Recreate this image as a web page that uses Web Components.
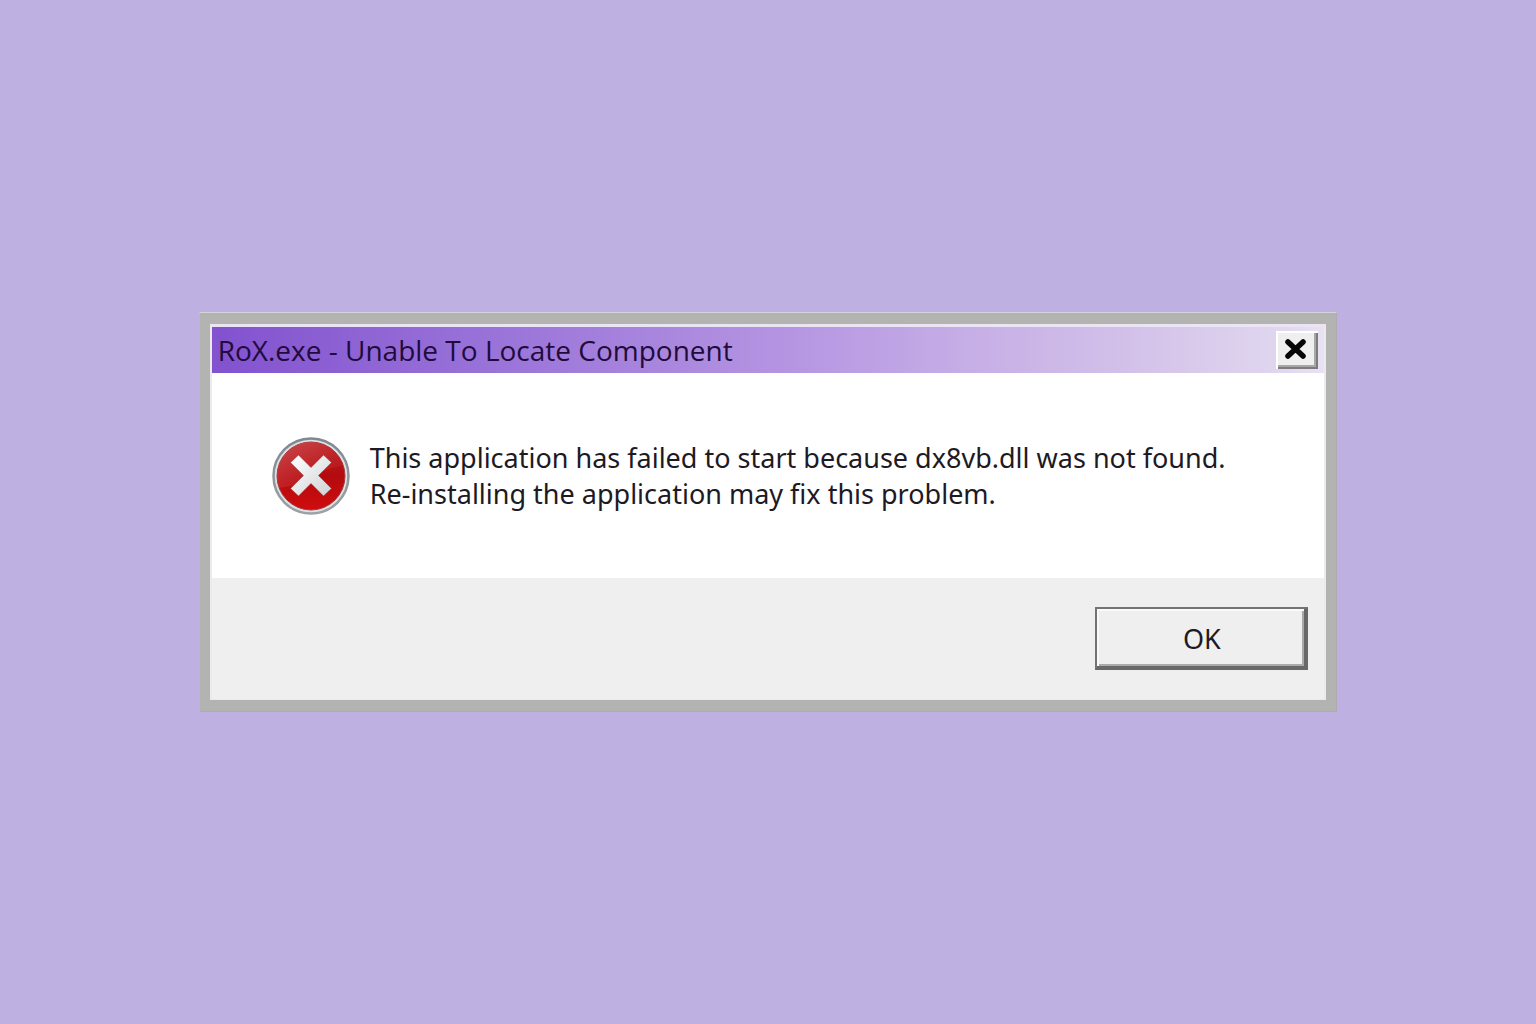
<!DOCTYPE html>
<html lang="en">
<head>
<meta charset="utf-8">
<meta name="viewport" content="width=device-width, initial-scale=1">
<title>RoX.exe - Unable To Locate Component</title>
<style>
  html, body { height: 100%; }
  body {
    margin: 0;
    display: grid;
    place-items: center;
    background: #bfb0e2;
    color: #1d1a24;
    font: 27px/36px "Noto Sans", "Open Sans", sans-serif;
  }
</style>
</head>
<body>
<classic-dialog>
  <title-bar slot="title">RoX.exe - Unable To Locate Component</title-bar>
  <error-icon slot="icon"></error-icon>
  <span>This application has failed to start because dx8vb.dll was not found.<br>Re-installing the application may fix this problem.</span>
  <dialog-button slot="actions">OK</dialog-button>
</classic-dialog>

<script>
class ClassicDialog extends HTMLElement {
  constructor() {
    super();
    this.attachShadow({ mode: 'open' }).innerHTML = `
      <style>
        :host { display: block; width: 74vw;
          background: #b3b3b1; border: 1px solid #aeabb3; border-top-color: #d6d2dc; border-left-color: #bcb7c4; }
        .window { margin: 11px 10px; background: #fff; border: solid #eceaee; border-top-color: #ebe4f2; border-width: 3px 2px 1px; }
        main { display: flex; align-items: center; gap: 20px; height: 205px; padding: 0 60px; box-sizing: border-box; }
        p { margin: 0; }
        footer { display: flex; justify-content: flex-end; padding: 29px 16px; background: #efefef; }
      </style>
      <section class="window" role="alertdialog" aria-labelledby="t" aria-describedby="m">
        <header id="t"><slot name="title"></slot></header>
        <main><slot name="icon"></slot><p id="m"><slot></slot></p></main>
        <footer><slot name="actions"></slot></footer>
      </section>`;
  }
}

class TitleBar extends HTMLElement {
  constructor() {
    super();
    this.attachShadow({ mode: 'open' }).innerHTML = `
      <style>
        :host { display: flex; align-items: center; justify-content: space-between; height: 46px;
          padding: 0 6px; color: #210b3c;
          background: linear-gradient(90deg, #8252cf, #9a74d9 26%, #b595e2 52%, #c6aee6 68%, #d2c0e9 82%, #e0d6ef 96%, #e9e2f2); }
        h1 { margin: 0; font: 28px/36px "Open Sans", "Noto Sans", sans-serif; white-space: nowrap; }
        button { box-sizing: border-box; width: 42px; height: 38px; padding: 0; border: 0; background: #efefef;
          display: grid; place-items: center;
          box-shadow: inset 2px 2px #fff, inset -2px -2px #7d7a80, inset -4px -4px #a8a8a8; }
        svg { display: block; width: 42px; height: 38px; }
      </style>
      <h1><slot></slot></h1>
      <button type="button" aria-label="Close">
        <svg viewBox="0 0 42 38" aria-hidden="true"><path d="M12 11 27 25M27 11 12 25" fill="none" stroke="#060606" stroke-width="5.500" stroke-linecap="round"/></svg>
      </button>`;
  }
}

class ErrorIcon extends HTMLElement {
  constructor() {
    super();
    this.attachShadow({ mode: 'open' }).innerHTML = `
      <style>
        :host { display: block; flex: none; width: 78px; height: 78px; }
        svg { display: block; width: 100%; height: 100%; }
      </style>
      <svg viewBox="0 0 78 78" role="img" aria-label="Error">
        <defs>
          <linearGradient id="rim" x2="0" y2="1"><stop stop-color="#7f8790"/><stop offset="1" stop-color="#9ca2a6"/></linearGradient>
          <linearGradient id="red" x2="0" y2="1"><stop stop-color="#b52326"/><stop offset=".5" stop-color="#b30b0f"/><stop offset="1" stop-color="#d00c0d"/></linearGradient>
          <linearGradient id="shine" x2="1" y2="1"><stop stop-color="#dc6c6e"/><stop offset=".6" stop-color="#c2282c"/><stop offset="1" stop-color="#b30b0f"/></linearGradient>
          <linearGradient id="cross" x2="1" y2="1"><stop stop-color="#fff"/><stop offset="1" stop-color="#cfd1d3"/></linearGradient>
          <clipPath id="disc"><circle cx="39" cy="39" r="34"/></clipPath>
        </defs>
        <circle cx="39" cy="39" r="37.5" fill="#dde1e3" stroke="url(#rim)" stroke-width="2.5"/>
        <circle cx="39" cy="39" r="34" fill="url(#red)" stroke="#a43b3d" stroke-width="1"/>
        <path d="M0 0H78V28C60 29 50 34 39 41S16 50 3 51Z" fill="url(#shine)" opacity=".6" clip-path="url(#disc)"/>
        <path d="M26.500 18 39 30.500 51.500 18 59.500 25.500 46.500 38.500 59.500 51.500 51.500 59 39 46.500 26.500 59 18.500 51.500 31.500 38.500 18.500 25.500Z" fill="url(#cross)" stroke="#8c1a1c" stroke-opacity=".4" stroke-linejoin="round"/>
      </svg>`;
  }
}

class DialogButton extends HTMLElement {
  constructor() {
    super();
    this.attachShadow({ mode: 'open', delegatesFocus: true }).innerHTML = `
      <style>
        :host { display: block; }
        button { display: block; box-sizing: border-box; min-width: 213px; height: 63px; padding: 0 16px;
          border: 2px solid #737373; border-right-color: #686868; border-bottom-color: #686868;
          background: #efefef; color: inherit; font: inherit;
          box-shadow: inset -2px -2px #686868, inset 2px 2px #fafafa, inset -4px -4px #aaa; }
      </style>
      <button type="button"><slot></slot></button>`;
  }
}

customElements.define('classic-dialog', ClassicDialog);
customElements.define('title-bar', TitleBar);
customElements.define('error-icon', ErrorIcon);
customElements.define('dialog-button', DialogButton);
</script>
</body>
</html>
